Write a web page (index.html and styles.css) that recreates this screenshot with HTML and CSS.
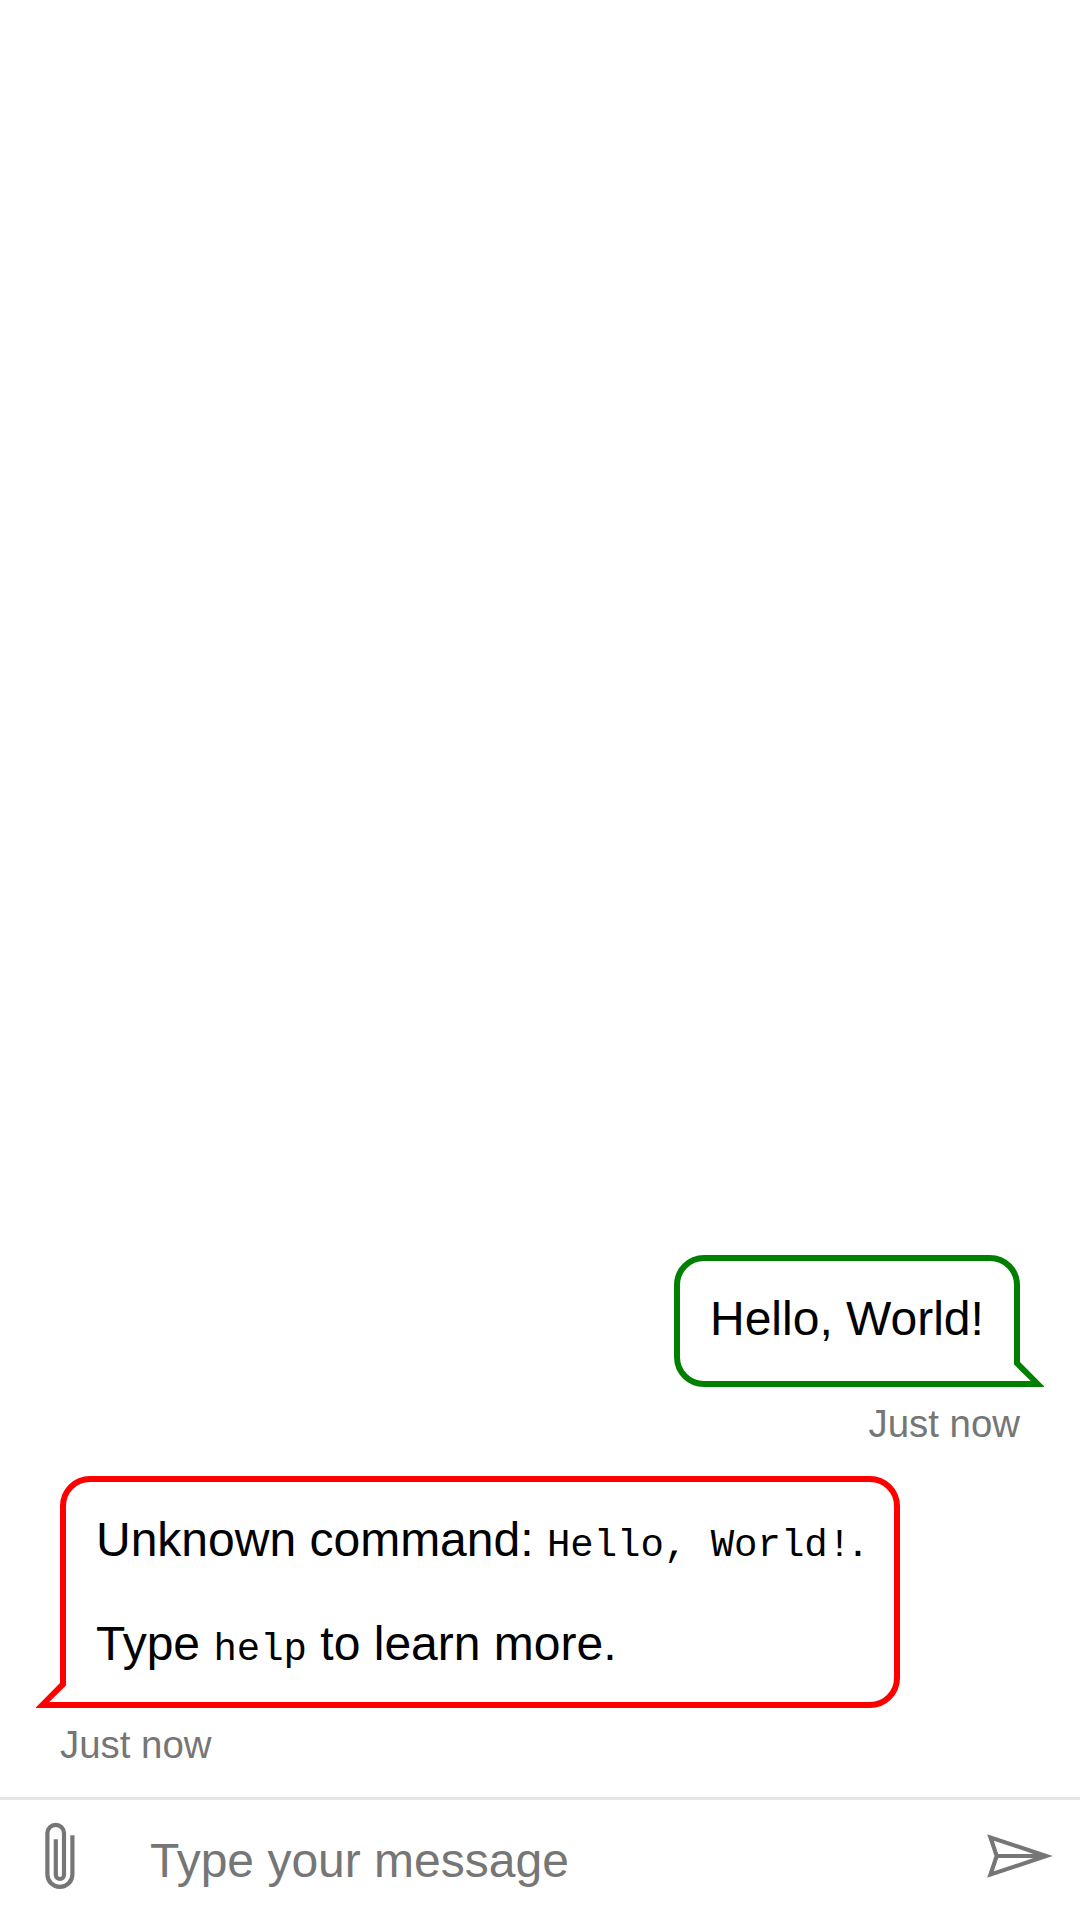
FILE: index.html
```html
<!DOCTYPE html>
<html lang="en">
<head>
<meta charset="utf-8">
<title>Chat</title>
<link rel="stylesheet" href="styles.css">
</head>
<body>
<main class="transcript">
  <article class="message message-user">
    <div class="bubble">
      <p>Hello, World!</p>
      <svg class="nub" viewBox="0 0 30 30" aria-hidden="true">
        <path class="nub-edge" d="M0 0H6V5L30 29.2V30H0Z"/>
        <path class="nub-fill" d="M0 0V7.4L16.8 24H-6V0Z"/>
      </svg>
    </div>
    <div class="timestamp">Just now</div>
  </article>
  <article class="message message-bot">
    <div class="bubble">
      <p>Unknown command: <code>Hello, World!</code>.</p>
      <p>Type <code>help</code> to learn more.</p>
      <svg class="nub" viewBox="0 0 30 30" aria-hidden="true">
        <path class="nub-edge" d="M0 0H6V5L30 29.2V30H0Z"/>
        <path class="nub-fill" d="M0 0V7.4L16.8 24H-6V0Z"/>
      </svg>
    </div>
    <div class="timestamp">Just now</div>
  </article>
</main>
<form class="send-box">
  <button class="icon-button" type="button" aria-label="Attach a file">
    <svg class="clip-icon" viewBox="0 0 32 68">
      <path d="M29.4 13.3V52.4A12.5 12.5 0 0 1 4.4 52.4V11.1A8.3 8.3 0 0 1 21 11.1V52.9A4.1 4.1 0 0 1 12.8 52.9V17.2"/>
    </svg>
  </button>
  <input class="message-input" type="text" placeholder="Type your message" aria-label="Message">
  <button class="icon-button" type="button" aria-label="Send">
    <svg class="send-icon" viewBox="0 0 45.7 33.8">
      <path d="M8.55 25.25l21.67-7.25H11zm2.41-9.47h19.26l-21.67-7.23zm-6 13l4-11.9L5 5l35.7 11.9z"/>
    </svg>
  </button>
</form>
</body>
</html>
```

FILE: styles.css
```css
* { box-sizing: border-box; }

body {
  margin: 0;
  height: 1920px;
  display: flex;
  flex-direction: column;
  background: #fff;
  color: #000;
  font: 48px/56px "Liberation Sans", Arial, sans-serif;
}

.transcript {
  flex: 1;
  display: flex;
  flex-direction: column;
  justify-content: flex-end;
  gap: 30px;
  padding: 0 60px 30px;
}

.message {
  display: flex;
  flex-direction: column;
}

.message-user {
  --edge: #008000;
  align-items: flex-end;
}

.message-bot {
  --edge: #ff0000;
  align-items: flex-start;
}

.bubble {
  position: relative;
  min-width: 346px;
  min-height: 132px;
  padding: 30px;
  border: 6px solid var(--edge);
  border-radius: 30px;
}

.message-user .bubble { border-bottom-right-radius: 0; }
.message-bot .bubble { border-bottom-left-radius: 0; }

.bubble p { margin: 0; }
.bubble p + p { margin-top: 48px; }

.bubble code {
  font-family: "Liberation Mono", monospace;
  font-size: 39px;
  line-height: 1;
}

.nub {
  position: absolute;
  bottom: -6px;
  width: 30px;
  height: 30px;
}

.message-user .nub { right: -30px; }

.message-bot .nub {
  left: -30px;
  transform: scaleX(-1);
}

.nub-edge { fill: var(--edge); }
.nub-fill { fill: #fff; }

.timestamp {
  padding-top: 15px;
  color: #767676;
  font-size: 38.4px;
  line-height: 44px;
}

.send-box {
  height: 123px;
  display: flex;
  border-top: 3px solid #e6e6e6;
}

.icon-button {
  width: 120px;
  padding: 0 0 8px;
  border: 0;
  background: none;
  display: flex;
  align-items: center;
  justify-content: center;
}

.clip-icon {
  width: 32px;
  height: 68px;
  margin-right: 2px;
  fill: none;
  stroke: #767676;
  stroke-width: 4.2;
}

.send-icon {
  width: 84px;
  height: 62px;
  fill: #767676;
}

.message-input {
  flex: 1;
  min-width: 0;
  padding: 2px 30px 0;
  border: 0;
  outline: 0;
  background: none;
  color: #000;
  font: inherit;
}

.message-input::placeholder {
  color: #767676;
  opacity: 1;
}
```
